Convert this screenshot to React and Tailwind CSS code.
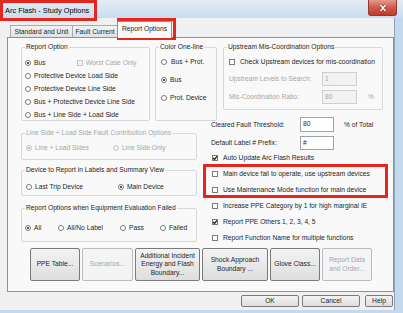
import React from 'react';

const Radio = ({ on, off }) => (
  <span
    className={
      off
        ? 'flex h-[6px] w-[6px] shrink-0 items-center justify-center rounded-full border border-[#c6c6c6] bg-[#f4f4f4]'
        : 'flex h-[6px] w-[6px] shrink-0 items-center justify-center rounded-full border border-[#7b7b7b] bg-white'
    }
  >
    {on && <span className={off ? 'h-[2px] w-[2px] rounded-full bg-[#a8a8a8]' : 'h-[2px] w-[2px] rounded-full bg-[#1e1e1e]'} />}
  </span>
);

const Check = ({ on, off }) => (
  <span
    className={
      off
        ? 'relative h-[6px] w-[6px] shrink-0 border border-[#c6c6c6] bg-[#f4f4f4]'
        : 'relative h-[6px] w-[6px] shrink-0 border border-[#7b7b7b] bg-white'
    }
  >
    {on && (
      <svg viewBox="0 0 6 6" className="absolute -left-[1px] -top-[1px] h-[6px] w-[6px] overflow-visible">
        <path d="M1.2 3 L2.5 4.5 L5 1.3" fill="none" stroke="#1e1e1e" strokeWidth="1.3" />
      </svg>
    )}
  </span>
);

const Opt = ({ on, off, w, children }) => (
  <div className={`flex items-center gap-[3px] ${w || ''}`}>
    <Radio on={on} off={off} />
    <span className={off ? 'text-[#a6a6a6]' : ''}>{children}</span>
  </div>
);

const Group = ({ title, off, className, children }) => (
  <fieldset className={`rounded-[2px] border border-[#d3d9de] ${className}`}>
    <legend className={off ? 'ml-[3px] px-[1px] leading-[8px] text-[#a6a6a6]' : 'ml-[3px] px-[1px] leading-[8px]'}>{title}</legend>
    {children}
  </fieldset>
);

const Box = ({ off, w, h, children }) => (
  <div
    className={`${w} ${h} ${
      off ? 'border border-[#cfcfcf] bg-[#f2f2f2] text-[#a6a6a6]' : 'border border-[#9ea3ab] bg-white'
    } px-[2px] leading-[11px]`}
  >
    {children}
  </div>
);

const CheckRow = ({ on, children }) => (
  <div className="flex h-[16px] items-center gap-[5px]">
    <Check on={on} />
    <span>{children}</span>
  </div>
);

const Btn = ({ w, off, children }) => (
  <div
    className={`${w} flex h-full items-center justify-center rounded-[2px] border text-center leading-[8.5px] ${
      off ? 'border-[#b8bcc0] bg-[#f4f4f4] text-[#a6a6a6]' : 'border-[#7a7a7a] bg-gradient-to-b from-[#f3f3f3] to-[#dedede]'
    }`}
  >
    {children}
  </div>
);

export default function App() {
  return (
    <div className="relative h-[313px] w-[403px] overflow-hidden bg-[#c4d8ee] font-['Liberation_Sans',Arial,sans-serif] text-[6.7px] leading-[8px] text-[#1e1e1e]">
      {/* title bar */}
      <div className="flex h-[18px] items-start bg-gradient-to-b from-[#e3ecf7] to-[#cbdcef]">
        <span className="mt-[6px] pl-[5px] text-[7.4px] leading-[9px] text-black">Arc Flash - Study Options</span>
        <div className="ml-auto mr-[6px] flex h-[16px] w-[29px] items-center justify-center rounded-b-[3px] border border-t-0 border-[#8e3a30] bg-gradient-to-b from-[#e39a8f] via-[#cf5a4d] to-[#c0392b]">
          <svg viewBox="0 0 10 8" className="h-[8px] w-[10px]">
            <path d="M2.5 1 L7.5 7 M7.5 1 L2.5 7" stroke="#5a1a14" strokeWidth="2.6" />
            <path d="M2.5 1 L7.5 7 M7.5 1 L2.5 7" stroke="#ffffff" strokeWidth="1.6" />
          </svg>
        </div>
      </div>

      <div className="flex">
        {/* client area */}
        <div className="flex h-[292px] w-[395px] flex-col border-r border-[#8fa3bb] bg-[#f0f0f0]">
          {/* tabs */}
          <div className="flex h-[19px] items-end pl-[10px]">
            <div className="flex h-[12px] w-[63px] items-center justify-center border border-b-0 border-[#a5a9b0] bg-gradient-to-b from-[#f4f4f4] to-[#e2e2e2]">
              Standard and Unit
            </div>
            <div className="-ml-[1px] flex h-[12px] w-[46px] items-center justify-center border border-b-0 border-[#a5a9b0] bg-gradient-to-b from-[#f4f4f4] to-[#e2e2e2]">
              Fault Current
            </div>
            <div className="relative z-10 -mb-[1px] -ml-[1px] flex h-[17px] w-[55px] items-center justify-center border border-b-0 border-[#8e9298] bg-[#f9f9f9] pb-[2px]">
              Report Options
            </div>
          </div>

          {/* tab panel */}
          <div className="ml-[7px] flex h-[255px] w-[387px] flex-col border border-[#8e9298] bg-[#f9f9f9] pl-[13px] pt-[5px]">
            <div className="flex items-start">
              {/* left column */}
              <div className="flex w-[196px] flex-col">
                <div className="flex">
                  <Group title="Report Option" className="h-[78px] w-[129px]">
                    <div className="flex flex-col pl-[3px] pt-[5px]">
                      <div className="flex h-[13px] items-center">
                        <Opt on w="w-[52px]">Bus</Opt>
                        <div className="flex items-center gap-[3px]">
                          <Check off />
                          <span className="text-[#a6a6a6]">Worst Case Only</span>
                        </div>
                      </div>
                      <div className="flex h-[13px] items-center"><Opt>Protective Device Load Side</Opt></div>
                      <div className="flex h-[13px] items-center"><Opt>Protective Device Line Side</Opt></div>
                      <div className="flex h-[13px] items-center"><Opt>Bus + Protective Device Line Side</Opt></div>
                      <div className="flex h-[13px] items-center"><Opt>Bus + Line Side + Load Side</Opt></div>
                    </div>
                  </Group>
                  <Group title="Color One-line" className="ml-[5px] h-[78px] w-[62px]">
                    <div className="flex flex-col pl-[5px] pt-[2px]">
                      <div className="flex h-[18px] items-center"><Opt w="gap-[4px]">Bus + Prot.</Opt></div>
                      <div className="flex h-[18px] items-center"><Opt on>Bus</Opt></div>
                      <div className="flex h-[18px] items-center"><Opt>Prot. Device</Opt></div>
                    </div>
                  </Group>
                </div>

                <Group title="Line Side + Load Side Fault Contribution Options" off className="mt-[8px] h-[31px] w-[176px]">
                  <div className="flex h-[18px] items-center pl-[4px] pt-[4px]">
                    <Opt on off w="w-[87px]">Line + Load Sides</Opt>
                    <Opt off>Line Side Only</Opt>
                  </div>
                </Group>

                <Group title="Device to Report in Labels and Summary View" className="mt-[6px] h-[30px] w-[176px]">
                  <div className="flex h-[21px] items-center pl-[4px] pt-[5px]">
                    <Opt w="w-[92px]">Last Trip Device</Opt>
                    <Opt on>Main Device</Opt>
                  </div>
                </Group>

                <Group title="Report Options when Equipment Evaluation Failed" className="mt-[8px] h-[38px] w-[176px]">
                  <div className="flex h-[29px] items-center pl-[3px] pt-[3px]">
                    <Opt on w="w-[33px]">All</Opt>
                    <Opt w="w-[62px]">All/No Label</Opt>
                    <Opt w="w-[40px]">Pass</Opt>
                    <Opt>Failed</Opt>
                  </div>
                </Group>
              </div>

              {/* right column */}
              <div className="ml-[6px] flex flex-col">
                <Group title="Upstream Mis-Coordination Options" className="h-[67px] w-[160px]">
                  <div className="flex flex-col pl-[5px] pt-[5px]">
                    <div className="flex h-[12px] items-center gap-[5px]">
                      <Check />
                      <span>Check Upstream devices for mis-coordination</span>
                    </div>
                    <div className="mt-[4px] flex h-[14px] items-center">
                      <span className="w-[93px] text-[#a6a6a6]">Upstream Levels to Search:</span>
                      <Box off w="w-[35px]" h="h-[14px]">1</Box>
                    </div>
                    <div className="mt-[4px] flex h-[14px] items-center">
                      <span className="w-[93px] text-[#a6a6a6]">Mis-Coordination Ratio:</span>
                      <Box off w="w-[35px]" h="h-[14px]">80</Box>
                      <span className="ml-[11px] text-[#a6a6a6]">%</span>
                    </div>
                  </div>
                </Group>

                <div className="-ml-[12px] flex flex-col">
                  <div className="mt-[7px] flex h-[15px] items-center">
                    <span className="w-[89px]">Cleared Fault Threshold:</span>
                    <Box w="w-[34px]" h="h-[15px]">80</Box>
                    <span className="ml-[10px]">% of Total</span>
                  </div>
                  <div className="mt-[4px] flex h-[14px] items-center">
                    <span className="w-[89px]">Default Label # Prefix:</span>
                    <Box w="w-[34px]" h="h-[14px]">#</Box>
                  </div>
                  <div className="flex flex-col pl-[1px]">
                    <CheckRow on>Auto Update Arc Flash Results</CheckRow>
                    <CheckRow>Main device fail to operate, use upstream devices</CheckRow>
                    <CheckRow>Use Maintenance Mode function for main device</CheckRow>
                    <CheckRow>Increase PPE Category by 1 for high marginal IE</CheckRow>
                    <CheckRow on>Report PPE Others 1, 2, 3, 4, 5</CheckRow>
                    <CheckRow>Report Function Name for multiple functions</CheckRow>
                  </div>
                </div>
              </div>
            </div>

            {/* action buttons */}
            <div className="ml-[9px] mt-[2px] flex h-[33px] gap-[2px]">
              <Btn w="w-[50px]">PPE Table...</Btn>
              <Btn w="w-[51px]" off>Scenarios...</Btn>
              <Btn w="w-[65px]">Additional Incident<br />Energy and Flash<br />Boundary...</Btn>
              <Btn w="w-[66px]">Shock Approach<br />Boundary ...</Btn>
              <Btn w="w-[50px]">Glove Class...</Btn>
              <Btn w="w-[50px]" off>Report Data<br />and Order...</Btn>
            </div>
          </div>

          {/* dialog buttons */}
          <div className="mt-[3px] flex h-[12px] justify-end pr-[1px]">
            <Btn w="w-[58px]">OK</Btn>
            <div className="ml-[3px] h-full"><Btn w="w-[58px]">Cancel</Btn></div>
            <div className="ml-[5px] h-full"><Btn w="w-[28px]">Help</Btn></div>
          </div>
        </div>
      </div>

      {/* red highlight annotations */}
      <div className="absolute left-0 top-0 h-[21px] w-[97px] border-[3px] border-[#e5261c]" />
      <div className="absolute left-[117px] top-[18px] h-[22px] w-[59px] border-[3px] border-[#e5261c]" />
      <div className="absolute left-[203px] top-[164px] h-[34px] w-[185px] border-[3px] border-[#e5261c]" />
    </div>
  );
}
